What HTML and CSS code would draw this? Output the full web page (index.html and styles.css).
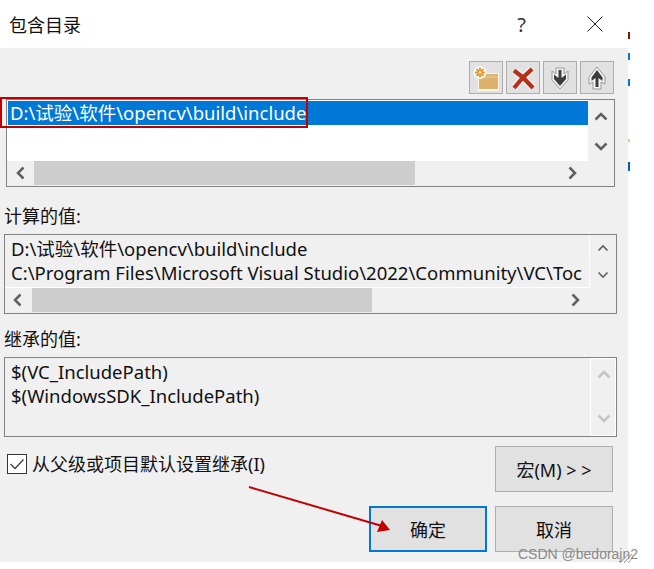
FILE: index.html
```html
<!DOCTYPE html>
<html lang="zh">
<head>
<meta charset="utf-8">
<title>包含目录</title>
<link rel="stylesheet" href="styles.css">
</head>
<body>
<div class="page">
  <div class="dialog">
    <header class="titlebar">
      <span class="title">包含目录</span>
      <span class="help">?</span>
      <svg class="close" width="16" height="16" viewBox="0 0 16 16"><path d="M.5.5l15 15M15.500.5l-15 15" stroke="#222" fill="none"/></svg>
    </header>
    <main class="body">
      <div class="toolbar">
        <button class="tool"><svg class="icon" width="28" height="26" viewBox="0 0 28 26"><path d="M6 10h5l1-2h15v18H6z" fill="#fbf6ec"/><path d="M7 11h5l1-2h13v15H7z" fill="#dcb26e"/><path d="M7 12h19" stroke="#eccf9c"/><circle cx="8" cy="7.500" r="6.500" fill="#fff"/><path d="M8 2.500v10M3 7.500h10M4.500 4l7 7M11.500 4l-7 7" stroke="#e0962a" stroke-width="1.800"/><circle cx="8" cy="7.500" r="1.500" fill="#f8dfae"/></svg></button>
        <button class="tool"><svg class="icon" width="28" height="26" viewBox="0 0 28 26"><path d="M5 5.500l9 7 9-8.500M5 23l9-10.500L24 23" stroke="#f6f0ee" stroke-width="7" fill="none"/><path d="M5 5.500l9 7 9-8.500M5 23l9-10.500L24 23" stroke="#b5301a" stroke-width="4.200" fill="none"/></svg></button>
        <button class="tool"><svg class="icon" width="28" height="26" viewBox="0 0 28 26"><path d="M10 3h8v6l4-3v9l-8 9-8-9V6l4 3z" fill="#f4f4f4" stroke="#9a9a9a"/><path d="M12.500 5h3v8l4.500-3.500v4.500L14 21l-6-7V9.500l4.500 3.500z" fill="#3c3c3c"/></svg></button>
        <button class="tool"><svg class="icon" width="28" height="26" viewBox="0 0 28 26"><path d="M10 24h8v-7l4 2v-7L14 2 6 12v7l4-2z" fill="#f4f4f4" stroke="#9a9a9a"/><path d="M12.500 22h3v-9l4 3v-3.500L14 5l-5.500 7.500V16l4-3z" fill="#3c3c3c"/></svg></button>
      </div>
      <section class="box box-edit">
        <div class="box-main">
          <div class="lines lines-edit">
            <div class="selected">D:\试验\软件\opencv\build\include</div>
          </div>
          <div class="vbar">
            <svg class="chev" width="14" height="9" viewBox="0 0 14 9"><path d="M1.500 7.500L7 2l5.500 5.500" stroke="#606060" stroke-width="2.500" fill="none"/></svg>
            <svg class="chev" width="14" height="9" viewBox="0 0 14 9"><path d="M1.500 1.500L7 7l5.500-5.500" stroke="#606060" stroke-width="2.500" fill="none"/></svg>
          </div>
        </div>
        <div class="hbar hbar-edit">
          <svg width="9" height="14" viewBox="0 0 9 14"><path d="M7.500 1.500L2 7l5.500 5.500" stroke="#606060" stroke-width="2.500" fill="none"/></svg>
          <div class="thumb thumb-edit"></div>
          <svg class="right" width="9" height="14" viewBox="0 0 9 14"><path d="M1.500 1.500L7 7l-5.500 5.500" stroke="#606060" stroke-width="2.500" fill="none"/></svg>
        </div>
      </section>
      <div class="label label-calc">计算的值:</div>
      <section class="box box-calc">
        <div class="box-main">
          <div class="lines lines-calc">
            <div class="line">D:\试验\软件\opencv\build\include</div>
            <div class="line">C:\Program Files\Microsoft Visual Studio\2022\Community\VC\Toc</div>
          </div>
          <div class="vbar vbar-calc">
            <svg width="12" height="8" viewBox="0 0 12 8"><path d="M1.500 6.500L6 2l4.500 4.500" stroke="#606060" stroke-width="1.600" fill="none"/></svg>
            <svg width="12" height="8" viewBox="0 0 12 8"><path d="M1.500 1.500L6 6l4.500-4.500" stroke="#606060" stroke-width="1.600" fill="none"/></svg>
          </div>
        </div>
        <div class="hbar hbar-calc">
          <svg width="9" height="14" viewBox="0 0 9 14"><path d="M7.500 1.500L2 7l5.500 5.500" stroke="#606060" stroke-width="2.500" fill="none"/></svg>
          <div class="thumb thumb-calc"></div>
          <svg class="right" width="9" height="14" viewBox="0 0 9 14"><path d="M1.500 1.500L7 7l-5.500 5.500" stroke="#606060" stroke-width="2.500" fill="none"/></svg>
        </div>
      </section>
      <div class="label label-inherit">继承的值:</div>
      <section class="box box-inherit">
        <div class="box-main">
          <div class="lines lines-inherit">
            <div class="line">$(VC_IncludePath)</div>
            <div class="line">$(WindowsSDK_IncludePath)</div>
          </div>
          <div class="vbar vbar-inherit">
            <svg width="14" height="9" viewBox="0 0 14 9"><path d="M1.500 7.500L7 2l5.500 5.500" stroke="#c4c4c4" stroke-width="2.500" fill="none"/></svg>
            <svg width="14" height="9" viewBox="0 0 14 9"><path d="M1.500 1.500L7 7l5.500-5.500" stroke="#c4c4c4" stroke-width="2.500" fill="none"/></svg>
          </div>
        </div>
      </section>
      <div class="footer">
        <label class="check">
          <svg class="checkbox" width="20" height="20" viewBox="0 0 20 20"><rect x=".5" y=".5" width="19" height="19" fill="#fff" stroke="#333"/><path d="M3.500 10l4.500 4.500 8.500-9" stroke="#444" stroke-width="1.400" fill="none"/></svg>
          <span>从父级或项目默认设置继承(I)</span>
        </label>
        <div class="buttons">
          <button class="btn btn-macro">宏(M) &gt; &gt;</button>
          <div class="btn-row">
            <button class="btn btn-ok">确定</button>
            <button class="btn">取消</button>
          </div>
        </div>
      </div>
    </main>
  </div>
  <div class="strip"><i class="speck s1"></i><i class="speck s2"></i><i class="speck s3"></i><i class="speck s4"></i><i class="speck s5"></i></div>

  <div class="redbox"></div>
  <svg class="arrow" width="150" height="50" viewBox="0 0 150 50"><path d="M1 1L134 40" stroke="#c00000" stroke-width="2" fill="none"/><path d="M142 44L129 46 134 34z" fill="#c00000"/></svg>
  <svg class="grip" width="14" height="12" viewBox="0 0 14 12"><path d="M1 12l9-10M5 12l8-9M9 12l5-6" stroke="#9a9a9a" fill="none"/></svg>
  <div class="watermark">CSDN @bedorajn2</div>
</div>
</body>
</html>
```

FILE: styles.css
```css
* { box-sizing: border-box; }
html, body { margin: 0; background: #fff; }
.page {
  position: relative;
  width: 654px;
  height: 569px;
  overflow: hidden;
  display: flex;
  font-family: "Noto Sans", "Noto Sans CJK SC", sans-serif;
  color: #111;
}
.dialog { width: 628px; height: 562px; display: flex; flex-direction: column; }
.titlebar {
  height: 48px;
  flex: none;
  background: #fff;
  display: flex;
  align-items: center;
  padding: 0 25px 0 9px;
}
.title { font-size: 18px; flex: 1; }
.help { font-size: 20px; margin-right: 61px; color: #333; }
.close { display: block; }
.body {
  flex: 1;
  background: #f0f0f0;
  padding: 13px 11px 0 4px;
  display: flex;
  flex-direction: column;
}
.toolbar { display: flex; justify-content: flex-end; gap: 3px; padding-right: 3px; height: 33px; }
.tool {
  width: 34px;
  height: 33px;
  padding: 0;
  background: #e1e1e1;
  border: 1px solid #adadad;
  display: flex;
  align-items: center;
  justify-content: center;
}
.icon { display: block; filter: blur(.4px); }
.box { border: 1px solid #828282; display: flex; flex-direction: column; }
.box-main { display: flex; flex: 1; min-height: 0; }
.box-edit { margin: 5px 2px 0 2px; height: 88px; background: #f0f0f0; }
.box-calc { margin-top: 5px; height: 80px; }
.box-inherit { margin-top: 5px; height: 80px; }
.lines { flex: 1; min-width: 0; overflow: hidden; white-space: nowrap; font-size: 18.500px; line-height: 24px; }
.lines-edit { background: #fff; padding: 1px 0 0 1px; }
.selected { background: #0078d7; color: #fff; height: 24px; padding-left: 2px; }
.lines-calc { padding: 2px 4px 0 6px; border: 1px solid #fff; border-width: 0 1px 1px 0; }
.lines-inherit { padding: 2px 4px 0 6px; }
.line { height: 24px; }
.vbar { width: 26px; flex: none; display: flex; flex-direction: column; align-items: center; justify-content: space-around; padding: 2px 0 0; }
.vbar-calc { padding: 0; }
.vbar-inherit { border-left: 1px solid #fff; outline: 1px solid #fff; outline-offset: -1px; justify-content: space-between; padding: 12px 0 13px; }
.hbar { display: flex; align-items: center; height: 24px; flex: none; padding-left: 8px; }
.hbar-edit { margin: 0 1px 1px 1px; }
.hbar-calc { margin-bottom: 1px; }
.thumb { background: #cdcdcd; height: 100%; }
.thumb-edit { width: 381px; margin-left: 9px; }
.thumb-calc { width: 340px; margin-left: 10px; }
.right { margin-left: auto; margin-right: 36px; }
.label { font-size: 18px; line-height: 22px; }
.label-calc { margin-top: 18px; height: 24px; }
.label-inherit { margin-top: 14px; height: 24px; }
.footer { display: flex; justify-content: space-between; margin-top: 9px; }
.check { display: flex; align-items: flex-start; gap: 5px; font-size: 18px; padding: 8px 0 0 3px; line-height: 20px; }
.checkbox { flex: none; display: block; }
.buttons { display: flex; flex-direction: column; align-items: flex-end; gap: 14px; padding-right: 4px; }
.btn-row { display: flex; gap: 8px; }
.btn {
  width: 118px;
  height: 46px;
  background: #e1e1e1;
  border: 1px solid #adadad;
  font: 18px "Noto Sans", "Noto Sans CJK SC", sans-serif;
  color: #111;
  padding: 0;
}
.btn-ok { border: 2px solid #0078d7; }
.strip { flex: 1; position: relative; }
.speck { position: absolute; left: 0; width: 2px; }
.s1 { top: 32px; height: 7px; background: #7a1a00; }
.s2 { top: 53px; height: 7px; background: #0078d7; }
.s3 { top: 79px; height: 7px; background: #0078d7; }
.s4 { top: 139px; height: 3px; background: #f0c868; }
.s5 { top: 162px; height: 9px; background: #0a5cad; }
.redbox {
  position: absolute;
  left: 0;
  top: 97px;
  width: 308px;
  height: 31px;
  border: 2px solid #c00000;
}
.arrow { position: absolute; left: 248px; top: 486px; }
.grip { position: absolute; left: 619px; top: 551px; }
.watermark {
  position: absolute;
  left: 518px;
  top: 546px;
  font: 14px "Liberation Sans", sans-serif;
  color: #8a8a8a;
  white-space: nowrap;
}
```
